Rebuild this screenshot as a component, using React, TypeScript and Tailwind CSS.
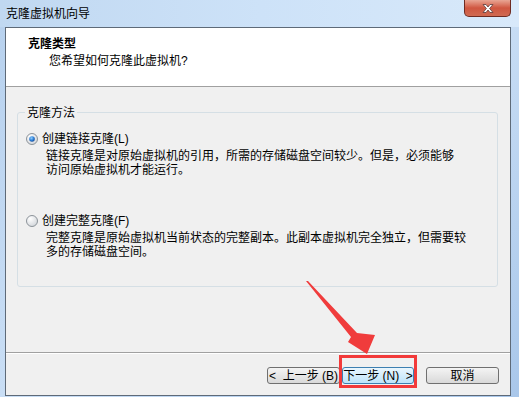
function Radio({ checked }: { checked: boolean }) {
  return (
    <svg width="12" height="12" viewBox="0 0 12 12" className="shrink-0">
      <defs>
        <radialGradient id={checked ? "rgOn" : "rgOff"} cx="0.35" cy="0.3" r="0.8">
          <stop offset="0" stopColor="#ffffff" />
          <stop offset="1" stopColor="#cfd3d8" />
        </radialGradient>
        <radialGradient id="dot" cx="0.4" cy="0.35" r="0.7">
          <stop offset="0" stopColor="#8fd0ff" />
          <stop offset="0.6" stopColor="#2a7bd4" />
          <stop offset="1" stopColor="#12468f" />
        </radialGradient>
      </defs>
      <circle cx="6" cy="6" r="5.5" fill={checked ? "url(#rgOn)" : "url(#rgOff)"} stroke="#8c9399" />
      {checked && <circle cx="6" cy="6" r="2.8" fill="url(#dot)" />}
    </svg>
  );
}

function Btn({ w, active, children }: { w: string; active?: boolean; children: React.ReactNode }) {
  return (
    <div
      className={`${w} h-[17px] rounded-[3px] border flex items-center justify-center text-[12px] leading-none whitespace-pre ${
        active
          ? "border-[#3c7fb1] bg-linear-to-b from-[#eaf6fd] to-[#bde4fa]"
          : "border-[#707070] bg-linear-to-b from-[#f4f4f4] to-[#d9d9d9]"
      }`}
    >
      {children}
    </div>
  );
}

export default function App() {
  return (
    <div className="relative w-[519px] h-[397px] overflow-hidden flex flex-col pb-[1px] bg-linear-to-br from-[#b7d1ee] via-[#c9def5] to-[#a9c7ea] text-black font-['Liberation_Sans','Noto_Sans_CJK_SC',sans-serif] text-[12px]">
      {/* title bar */}
      <div className="h-[27px] flex shrink-0 bg-linear-to-r from-[#c0d8f1] via-[#cde2f8] to-[#d8e9fa]">
        <div className="pl-[6px] self-center leading-[14px] text-[12px]">克隆虚拟机向导</div>
        <div className="ml-auto mr-[8px] w-[47px] h-[17px] rounded-b-[5px] border border-t-0 border-[#6e2b22] bg-linear-to-b from-[#e8a594] via-[#cf5640] to-[#d06a52] flex items-center justify-center">
          <svg width="14" height="11" viewBox="0 0 14 11">
            <path
              d="M2 1.5 L5 1.5 L7 4 L9 1.5 L12 1.5 L8.6 5.5 L12 9.5 L9 9.5 L7 7 L5 9.5 L2 9.5 L5.4 5.5 Z"
              fill="#ffffff"
              stroke="#5a3a3a"
              strokeWidth="0.8"
              strokeLinejoin="round"
            />
          </svg>
        </div>
      </div>

      <div className="flex flex-1">
        <div className="w-[5px]" />
        {/* client area */}
        <div className="w-[506px] border border-[#5e6a78] flex flex-col">
          <div className="h-[59px] bg-white border-b border-[#a0a0a0] pl-[22px] pt-[9px]">
            <div className="font-bold leading-[14px]">克隆类型</div>
            <div className="leading-[14px] mt-[3px] pl-[21px]">您希望如何克隆此虚拟机?</div>
          </div>

          <div className="h-[265px] bg-[#f0f0f0] pt-[25px] pl-[11px] pr-[12px]">
            <div className="relative h-[175px] rounded-[3px] border border-[#d5dfe5] pt-[19px] pl-[8px]">
              <span className="absolute left-[7px] top-[-7px] px-[2px] bg-[#f0f0f0] leading-[14px]">克隆方法</span>

              <div className="flex items-center gap-[4px] h-[14px]">
                <Radio checked />
                <span className="leading-[14px]">创建链接克隆(L)</span>
              </div>
              <div className="pl-[20px] mt-[3px] leading-[14px]">
                <p>链接克隆是对原始虚拟机的引用，所需的存储磁盘空间较少。但是，必须能够</p>
                <p>访问原始虚拟机才能运行。</p>
              </div>

              <div className="flex items-center gap-[4px] h-[14px] mt-[37px]">
                <Radio checked={false} />
                <span className="leading-[14px]">创建完整克隆(F)</span>
              </div>
              <div className="pl-[20px] mt-[3px] leading-[14px]">
                <p>完整克隆是原始虚拟机当前状态的完整副本。此副本虚拟机完全独立，但需要较</p>
                <p>多的存储磁盘空间。</p>
              </div>
            </div>
          </div>

          <div className="border-t border-[#a0a0a0] flex-1 flex flex-col">
            <div className="border-t border-white flex-1 bg-[#f0f0f0] flex justify-end pt-[13px] pr-[11px]">
              <Btn w="w-[73px]">{"<  上一步 (B)"}</Btn>
              <div className="w-[2px]" />
              <Btn w="w-[72px]" active>{"下一步 (N)  >"}</Btn>
              <div className="w-[12px]" />
              <Btn w="w-[73px]">取消</Btn>
            </div>
          </div>
        </div>
        <div className="w-[8px]" />
      </div>

      {/* annotation: red highlight + arrow */}
      <div className="absolute left-[339px] top-[355px] w-[78px] h-[33px] border-[3px] border-[#f23a3a] pointer-events-none" />
      <svg className="absolute left-0 top-0 pointer-events-none" width="519" height="397" viewBox="0 0 519 397">
        <polygon
          points="306,281 308,281 357,333 375,335 367,354 348,342 351,337"
          fill="#f03c3c"
        />
      </svg>
    </div>
  );
}
